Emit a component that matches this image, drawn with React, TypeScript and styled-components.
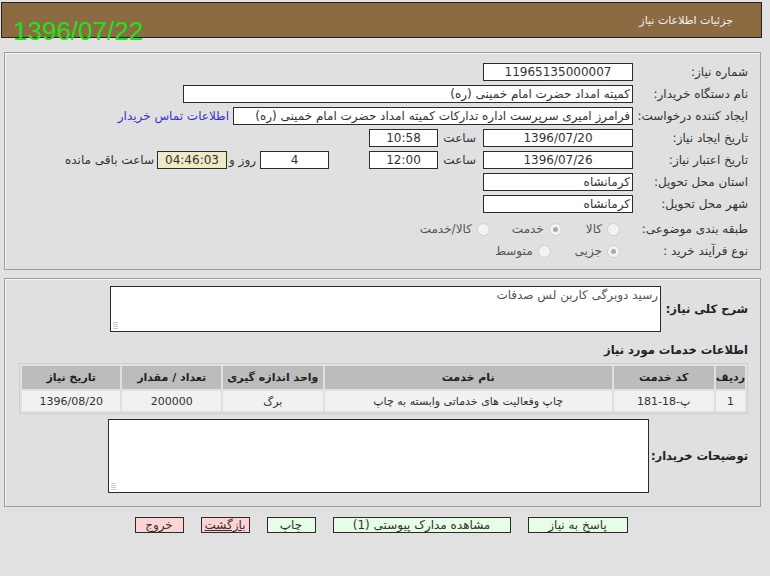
import React from 'react';
import styled, { createGlobalStyle } from 'styled-components';

const Global = createGlobalStyle`
  html, body {
    margin: 0;
    padding: 0;
    background: #e1e1e1;
  }
  body {
    font-family: "DejaVu Sans", Tahoma, sans-serif;
    font-size: 12px;
    color: #333;
  }
`;

const Page = styled.div`
  direction: rtl;
  width: 770px;
  height: 576px;
  padding: 2px 8px 0 1px;
  box-sizing: border-box;
  overflow: hidden;
`;

const Header = styled.div`
  position: relative;
  height: 36px;
  background: #8c6b43;
  border: 1px solid #222;
  box-sizing: border-box;
  display: flex;
  align-items: center;
  padding-right: 28px;
  color: #f2f2f2;
  font-size: 11px;
`;

const Stamp = styled.div`
  position: absolute;
  left: 11px;
  top: 15px;
  direction: ltr;
  font-family: "Liberation Sans", Arial, sans-serif;
  font-size: 26px;
  line-height: 26px;
  color: #1fe21f;
`;

const Panel = styled.div<{ $top: number; $pad: string }>`
  margin: ${(p) => p.$top}px 1px 0 3px;
  border: 1px solid #9c9c9c;
  box-shadow: inset 1px 1px 0 #f4f4f4;
  background: #e0e0e0;
  padding: ${(p) => p.$pad};
`;

const Row = styled.div<{ $mt?: number }>`
  display: flex;
  align-items: center;
  height: 22px;
  margin-top: ${(p) => p.$mt || 0}px;
`;

const Label = styled.div`
  width: 111px;
  flex: none;
  text-align: right;
  white-space: nowrap;
  color: #333;
`;

const Box = styled.div<{ $w: number; $gap?: number; $align?: string; $bg?: string }>`
  width: ${(p) => p.$w}px;
  height: 18px;
  flex: none;
  box-sizing: border-box;
  margin-inline-start: ${(p) => p.$gap ?? 4}px;
  border: 1px solid #2b2b2b;
  background: ${(p) => p.$bg || '#fff'};
  text-align: ${(p) => p.$align || 'center'};
  line-height: 16px;
  font-size: 12px;
  color: #333;
  padding: 0 2px;
  white-space: nowrap;
  overflow: hidden;
`;

const Word = styled.span<{ $gap?: number; $w?: number }>`
  margin-inline-start: ${(p) => p.$gap ?? 3}px;
  width: ${(p) => (p.$w ? `${p.$w}px` : 'auto')};
  flex: none;
  text-align: right;
  white-space: nowrap;
  color: #333;
`;

const Link = styled.a`
  margin-inline-start: 4px;
  color: #3535c8;
  text-decoration: none;
  white-space: nowrap;
`;

const Option = styled.span<{ $gap: number }>`
  display: inline-flex;
  align-items: center;
  gap: 5px;
  margin-inline-start: ${(p) => p.$gap}px;
  color: #555;
  white-space: nowrap;
`;

const Radio = styled.span<{ $on?: boolean }>`
  width: 11px;
  height: 11px;
  border-radius: 50%;
  border: 1px solid #cfcfcf;
  background: #f3f3f3;
  display: inline-flex;
  align-items: center;
  justify-content: center;
  &::after {
    content: '';
    width: 5px;
    height: 5px;
    border-radius: 50%;
    background: ${(p) => (p.$on ? '#a9a9a9' : 'transparent')};
  }
`;

const BlockRow = styled.div<{ $mt?: number }>`
  display: flex;
  align-items: center;
  margin-top: ${(p) => p.$mt || 0}px;
`;

const BoldLabel = styled.div<{ $w: number }>`
  width: ${(p) => p.$w}px;
  flex: none;
  text-align: right;
  font-weight: bold;
  font-size: 11.5px;
  color: #222;
  white-space: nowrap;
`;

const AreaWrap = styled.div`
  position: relative;
  margin-inline-start: 4px;
  display: flex;
`;

const Area = styled.textarea<{ $w: number; $h: number }>`
  width: ${(p) => p.$w}px;
  height: ${(p) => p.$h}px;
  box-sizing: border-box;
  margin: 0;
  border: 1px solid #2b2b2b;
  background: #fff;
  font-family: "DejaVu Sans", Tahoma, sans-serif;
  font-size: 12px;
  color: #555;
  padding: 1px 2px;
  resize: none;
  outline: none;
`;

const Grip = styled.span`
  position: absolute;
  left: 3px;
  bottom: 3px;
  width: 5px;
  height: 7px;
  background-image: linear-gradient(#c4c4c4 1px, transparent 1px),
    linear-gradient(90deg, transparent 1px, #fff 1px);
  background-size: 2px 2px;
  opacity: 0.9;
`;

const Heading = styled.div`
  font-weight: bold;
  font-size: 11.5px;
  color: #222;
  margin-top: 9px;
  height: 18px;
  line-height: 18px;
`;

const Grid = styled.table`
  width: 729px;
  margin-top: 4px;
  border: 1px solid #cdcdcd;
  border-spacing: 2px;
  font-size: 11px;
`;

const Th = styled.th<{ $w: number }>`
  width: ${(p) => p.$w}px;
  height: 23px;
  background: #bcbcbc;
  color: #222;
  font-weight: bold;
  padding: 0;
  text-align: center;
  white-space: nowrap;
`;

const Td = styled.td`
  height: 20px;
  background: #f1f1f1;
  color: #333;
  text-align: center;
  padding: 0;
`;

const Buttons = styled.div`
  display: flex;
  justify-content: center;
  gap: 17px;
  margin-top: 10px;
  padding-right: 1px;
`;

const Button = styled.button<{ $w: number; $tone: 'go' | 'stop'; $u?: boolean }>`
  width: ${(p) => p.$w}px;
  height: 16px;
  box-sizing: border-box;
  padding: 0;
  border: 1px solid #2b2b2b;
  background: ${(p) => (p.$tone === 'go' ? '#e6fde6' : '#ffd3d3')};
  font-family: "DejaVu Sans", Tahoma, sans-serif;
  font-size: 12px;
  color: #333;
  line-height: 14px;
  white-space: nowrap;
  text-decoration: ${(p) => (p.$u ? 'underline' : 'none')};
`;

const columns = [
  { t: 'ردیف', w: 27 },
  { t: 'کد خدمت', w: 101 },
  { t: 'نام خدمت', w: 291 },
  { t: 'واحد اندازه گیری', w: 100 },
  { t: 'تعداد / مقدار', w: 99 },
  { t: 'تاریخ نیاز', w: 99 },
];

const rows = [
  ['1', 'پ-18-181', 'چاپ وفعالیت های خدماتی وابسته به چاپ', 'برگ', '200000', '1396/08/20'],
];

export default function App() {
  return (
    <Page>
      <Global />
      <Header>
        جزئیات اطلاعات نیاز
        <Stamp>1396/07/22</Stamp>
      </Header>

      <Panel $top={14} $pad="8px 12px 7px 0">
        <Row>
          <Label>شماره نیاز:</Label>
          <Box $w={150}>11965135000007</Box>
        </Row>
        <Row>
          <Label>نام دستگاه خریدار:</Label>
          <Box $w={450} $align="right">کمیته امداد حضرت امام خمینی (ره)</Box>
        </Row>
        <Row>
          <Label>ایجاد کننده درخواست:</Label>
          <Box $w={400} $align="right">فرامرز امیری سرپرست اداره تدارکات کمیته امداد حضرت امام خمینی (ره)</Box>
          <Link href="#">اطلاعات تماس خریدار</Link>
        </Row>
        <Row>
          <Label>تاریخ ایجاد نیاز:</Label>
          <Box $w={150}>1396/07/20</Box>
          <Word $gap={7} $w={35}>ساعت</Word>
          <Box $w={69} $gap={3}>10:58</Box>
        </Row>
        <Row>
          <Label>تاریخ اعتبار نیاز:</Label>
          <Box $w={150}>1396/07/26</Box>
          <Word $gap={7} $w={35}>ساعت</Word>
          <Box $w={69} $gap={3}>12:00</Box>
          <Box $w={69} $gap={40}>4</Box>
          <Word $gap={4} $w={27}>روز و</Word>
          <Box $w={70} $gap={2} $bg="#efe9c6">04:46:03</Box>
          <Word $gap={3}>ساعت باقی مانده</Word>
        </Row>
        <Row>
          <Label>استان محل تحویل:</Label>
          <Box $w={150} $align="right">کرمانشاه</Box>
        </Row>
        <Row>
          <Label>شهر محل تحویل:</Label>
          <Box $w={150} $align="right">کرمانشاه</Box>
        </Row>
        <Row $mt={3}>
          <Label>طبقه بندی موضوعی:</Label>
          <Option $gap={17}><Radio />کالا</Option>
          <Option $gap={24}><Radio $on />خدمت</Option>
          <Option $gap={22}><Radio />کالا/خدمت</Option>
        </Row>
        <Row>
          <Label>نوع فرآیند خرید :</Label>
          <Option $gap={17}><Radio $on />جزیی</Option>
          <Option $gap={24}><Radio />متوسط</Option>
        </Row>
      </Panel>

      <Panel $top={8} $pad="7px 12px 13px 13px">
        <BlockRow>
          <BoldLabel $w={83}>شرح کلی نیاز:</BoldLabel>
          <AreaWrap>
            <Area $w={551} $h={46} readOnly defaultValue="رسید دوبرگی کاربن لس صدفات" />
            <Grip />
          </AreaWrap>
        </BlockRow>
        <Heading>اطلاعات خدمات مورد نیاز</Heading>
        <Grid>
          <thead>
            <tr>
              {columns.map((c) => (
                <Th key={c.t} $w={c.w}>{c.t}</Th>
              ))}
            </tr>
          </thead>
          <tbody>
            {rows.map((r) => (
              <tr key={r[0]}>
                {r.map((v, i) => (
                  <Td key={i}>{v}</Td>
                ))}
              </tr>
            ))}
          </tbody>
        </Grid>
        <BlockRow $mt={5}>
          <BoldLabel $w={95}>توضیحات خریدار:</BoldLabel>
          <AreaWrap>
            <Area $w={541} $h={74} readOnly defaultValue="" />
            <Grip />
          </AreaWrap>
        </BlockRow>
      </Panel>

      <Buttons>
        <Button $w={100} $tone="go">پاسخ به نیاز</Button>
        <Button $w={178} $tone="go">مشاهده مدارک پیوستی (1)</Button>
        <Button $w={49} $tone="go">چاپ</Button>
        <Button $w={49} $tone="stop" $u>بازگشت</Button>
        <Button $w={49} $tone="stop">خروج</Button>
      </Buttons>
    </Page>
  );
}
